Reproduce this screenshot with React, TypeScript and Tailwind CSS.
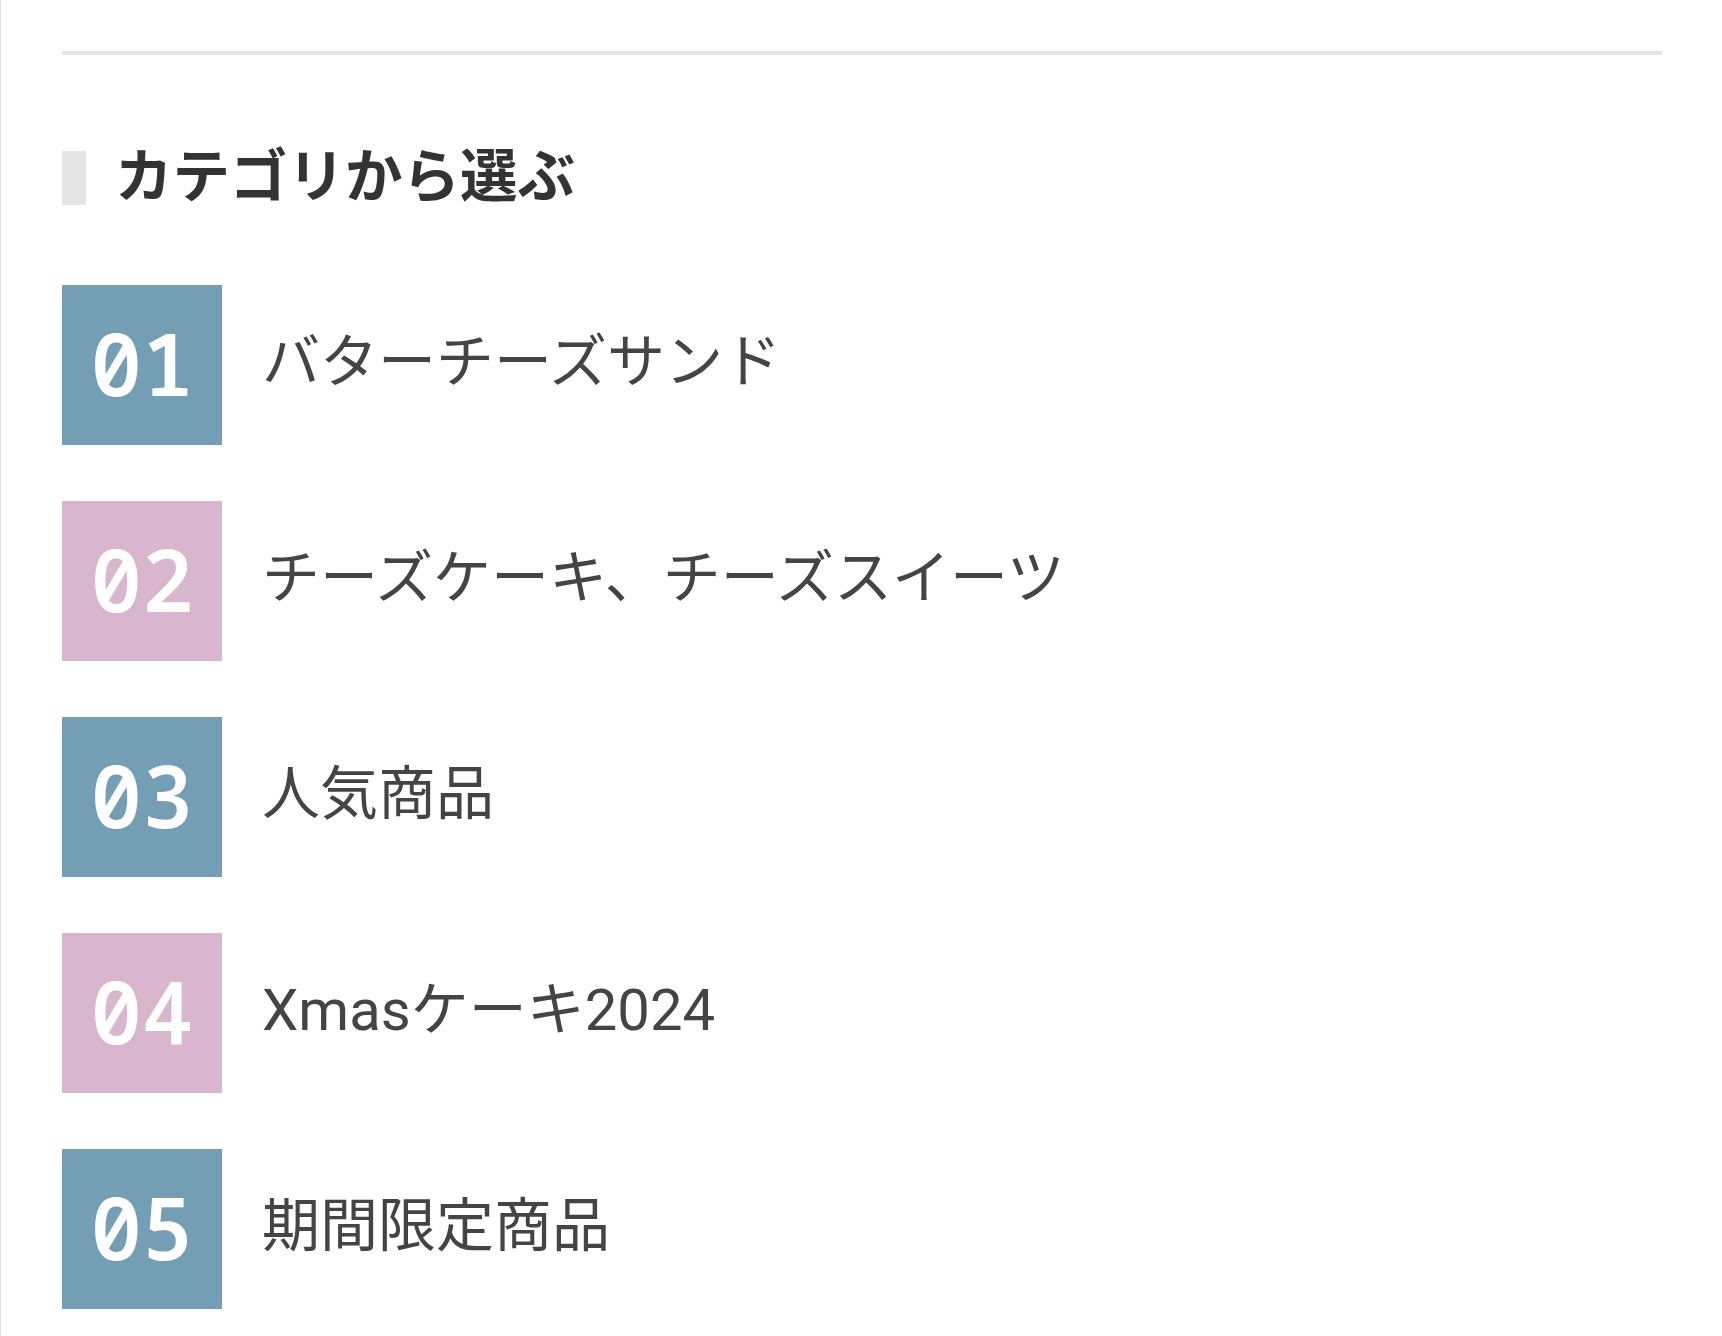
const categories = [
  { no: "01", label: "バターチーズサンド", color: "bg-[#749eb4]" },
  { no: "02", label: "チーズケーキ、チーズスイーツ", color: "bg-[#d7b6ce]" },
  { no: "03", label: "人気商品", color: "bg-[#749eb4]" },
  { no: "04", label: "Xmasケーキ2024", color: "bg-[#d7b6ce]" },
  { no: "05", label: "期間限定商品", color: "bg-[#749eb4]" },
];

export default function App() {
  return (
    <div
      className="min-h-screen bg-white border-l border-[#dddddd] pl-[61px] pr-[60px] pt-[51px]"
      style={{ fontFamily: "Roboto, 'Noto Sans CJK JP', sans-serif" }}
    >
      <div className="h-[4px] bg-[#e5e5e5]" />

      <h2 className="mt-[94px] flex items-center">
        <span className="w-[24px] h-[54px] bg-[#e5e5e5]" />
        <span className="ml-[29px] text-[57.5px] leading-none font-bold text-[#333333]">
          カテゴリから選ぶ
        </span>
      </h2>

      <ul className="mt-[78px] flex flex-col gap-[56px]">
        {categories.map((c) => (
          <li key={c.no}>
            <a href="#" className="flex items-center">
              <span
                className={`${c.color} w-[160px] h-[160px] flex items-center justify-center pb-[4px] text-white text-[86px] font-semibold leading-none slashed-zero`}
                style={{ fontFamily: "'Noto Sans Mono', 'DejaVu Sans Mono', monospace" }}
              >
                {c.no}
              </span>
              <span className="ml-[40px] text-[58px] leading-none text-[#444444] pb-[5px]">
                {c.label}
              </span>
            </a>
          </li>
        ))}
      </ul>
    </div>
  );
}
